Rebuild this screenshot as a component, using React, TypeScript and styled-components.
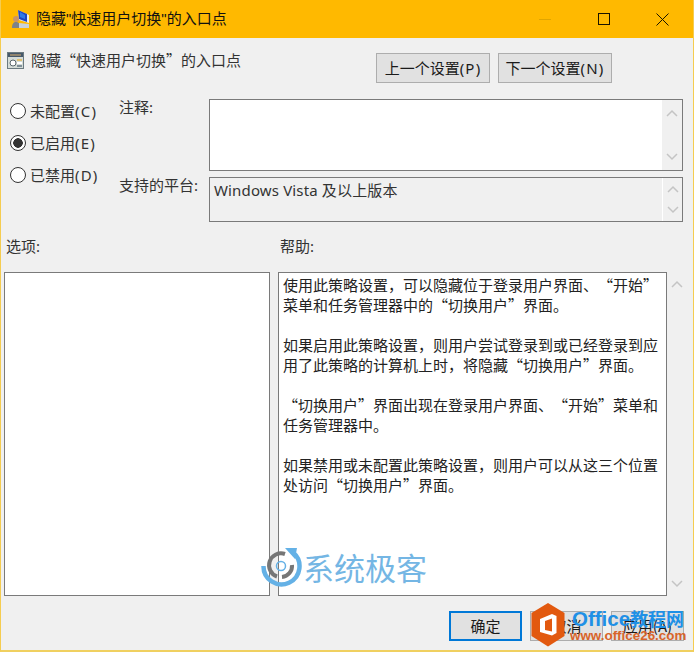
import React from "react";
import styled, { createGlobalStyle } from "styled-components";

const UI_FONT = `"Noto Sans", "Noto Sans CJK SC", sans-serif`;
const CJK_FONT = `"Noto Sans CJK SC", "Noto Sans", sans-serif`;

const GlobalStyle = createGlobalStyle`
  html, body {
    margin: 0;
    padding: 0;
    background: #f0f0f0;
  }
`;

const helpParagraphs = [
  ["使用此策略设置\uff0c可以隐藏位于登录用户界面、“开始”", "菜单和任务管理器中的“切换用户”界面。"],
  ["如果启用此策略设置\uff0c则用户尝试登录到或已经登录到应", "用了此策略的计算机上时\uff0c将隐藏“切换用户”界面。"],
  ["“切换用户”界面出现在登录用户界面、“开始”菜单和", "任务管理器中。"],
  ["如果禁用或未配置此策略设置\uff0c则用户可以从这三个位置", "处访问“切换用户”界面。"],
];

const radios = [
  { label: "未配置", hotkey: "(C)", checked: false },
  { label: "已启用", hotkey: "(E)", checked: true },
  { label: "已禁用", hotkey: "(D)", checked: false },
];

const Chevron = ({ up }: { up?: boolean }) => (
  <svg width="12" height="8" viewBox="0 0 12 8">
    <path
      d={up ? "M1 7 L6 2 L11 7" : "M1 1 L6 6 L11 1"}
      fill="none"
      stroke="#c4c4c4"
      strokeWidth="1.5"
    />
  </svg>
);

const AppIcon = () => (
  <svg width="20" height="20" viewBox="0 0 20 20">
    <path d="M7 1 L18 6 L18 14 L8 11 Z" fill="#e8eef5" />
    <path d="M7 1 L16 5 L16 13 L8 10 Z" fill="#1f45c0" />
    <path d="M9 3 L14 6 L14 10 L9 8 Z" fill="#2f7ae8" />
    <circle cx="5" cy="10" r="3" fill="#c99468" />
    <path d="M1 19 C1 14 3 13 5 13 C8 13 9 15 9 19 Z" fill="#7d8288" />
    <path d="M8 14 L18 15 L18 19 L8 19 Z" fill="#c9d2da" />
  </svg>
);

const PolicyIcon = () => (
  <svg width="17" height="17" viewBox="0 0 17 17">
    <rect x="0.5" y="0.5" width="16" height="16" fill="#d5dcd8" stroke="#6b7a80" />
    <rect x="1" y="1" width="15" height="4" fill="#46586a" />
    <rect x="3" y="2.5" width="11" height="1" fill="#d9b070" />
    <circle cx="6" cy="11" r="3" fill="#fff" stroke="#59666c" />
    <rect x="10" y="7" width="5" height="2" fill="#e0c070" />
    <rect x="10" y="10" width="5" height="2" fill="#fff" />
    <rect x="10" y="13" width="5" height="2" fill="#7f8f98" />
  </svg>
);

export default function App() {
  return (
    <Window>
      <GlobalStyle />
      <TitleBar>
        <AppIcon />
        <TitleText>隐藏"快速用户切换"的入口点</TitleText>
        <WindowControls>
          <ControlSlot>
            <svg width="12" height="12" viewBox="0 0 12 12">
              <path d="M0 6.5 H12" stroke="#e0a500" />
            </svg>
          </ControlSlot>
          <ControlSlot>
            <svg width="12" height="12" viewBox="0 0 12 12">
              <rect x="0.5" y="0.5" width="11" height="11" fill="none" stroke="#1a1400" />
            </svg>
          </ControlSlot>
          <ControlSlot>
            <svg width="13" height="13" viewBox="0 0 13 13">
              <path d="M0.5 0.5 L12.5 12.5 M12.5 0.5 L0.5 12.5" stroke="#1a1400" />
            </svg>
          </ControlSlot>
        </WindowControls>
      </TitleBar>

      <Body>
        <HeaderRow>
          <PolicyName>
            <PolicyIcon />
            <PolicyText>隐藏“快速用户切换”的入口点</PolicyText>
          </PolicyName>
          <NavButtons>
            <NavButton>上一个设置<Hotkey>(P)</Hotkey></NavButton>
            <NavButton>下一个设置<Hotkey>(N)</Hotkey></NavButton>
          </NavButtons>
        </HeaderRow>

        <ConfigRow>
          <RadioColumn>
            {radios.map((radio) => (
              <RadioRow key={radio.label}>
                <RadioCircle $checked={radio.checked} />
                <span>
                  {radio.label}
                  <Hotkey>{radio.hotkey}</Hotkey>
                </span>
              </RadioRow>
            ))}
          </RadioColumn>
          <FieldGrid>
            <FieldLabel>注释:</FieldLabel>
            <FieldBox $height={72} $white>
              <ScrollRail $inset>
                <Chevron up />
                <Chevron />
              </ScrollRail>
            </FieldBox>
            <FieldLabel>支持的平台:</FieldLabel>
            <FieldBox $height={45}>
              <PlatformText>Windows Vista 及以上版本</PlatformText>
              <ScrollRail $divider>
                <Chevron up />
                <Chevron />
              </ScrollRail>
            </FieldBox>
          </FieldGrid>
        </ConfigRow>

        <PanelHeadings>
          <OptionsHeading>选项:</OptionsHeading>
          <span>帮助:</span>
        </PanelHeadings>

        <Panels>
          <OptionsPanel />
          <HelpPanel>
            {helpParagraphs.map((lines) => (
              <HelpParagraph key={lines[0]}>
                {lines.map((line) => (
                  <div key={line}>{line}</div>
                ))}
              </HelpParagraph>
            ))}
          </HelpPanel>
          <HelpRail>
            <Chevron up />
            <Chevron />
          </HelpRail>
        </Panels>

        <Footer>
          <DialogButton $primary>确定</DialogButton>
          <DialogButton>取消</DialogButton>
          <DialogButton>应用(A)</DialogButton>
        </Footer>
      </Body>

      <SiteMark>
        <svg width="42" height="40" viewBox="0 0 42 40">
          <path
            d="M2.5 19 A18 18 0 1 0 32 5.5"
            fill="none"
            stroke="#64b1e6"
            strokeWidth="4.5"
          />
          <path d="M24 1 L36 1 L34 12 Z" fill="#64b1e6" />
          <path
            d="M24 7 A11.5 11.5 0 0 0 16 29.5"
            fill="none"
            stroke="#767676"
            strokeWidth="4"
          />
          <path d="M31 18 A11 11 0 0 1 21 30" fill="none" stroke="#767676" strokeWidth="4" />
          <circle cx="20" cy="19" r="4.5" fill="none" stroke="#64b1e6" strokeWidth="1.5" />
        </svg>
        <SiteMarkText>系统极客</SiteMarkText>
      </SiteMark>

      <OfficeMark>
        <svg width="34" height="44" viewBox="0 0 34 44">
          <path d="M17 0 L33.5 10 L33.5 33 L17 43.5 L0.5 33 L0.5 10 Z" fill="#e2590f" />
          <path
            d="M9 16 L21 11 L25.5 13 L25.5 30 L21 32.5 L9 29 Z M14 18 L21 15.5 L21 28.5 L14 27 Z"
            fill="#fff"
            fillRule="evenodd"
          />
        </svg>
        <OfficeText>
          <OfficeName>
            Office<OfficeNameCjk>教程网</OfficeNameCjk>
          </OfficeName>
          <OfficeUrl>www.office26.com</OfficeUrl>
        </OfficeText>
      </OfficeMark>
    </Window>
  );
}

const Window = styled.div`
  position: relative;
  width: 694px;
  height: 652px;
  box-sizing: border-box;
  overflow: hidden;
  display: flex;
  flex-direction: column;
  background: #f0f0f0;
  color: #1a1a1a;
  font-family: ${UI_FONT};
  font-size: 15px;
  line-height: 20px;
  border-left: 1px solid #f5cc50;
  border-right: 1px solid #f5cc50;
  border-bottom: 2px solid #f0d060;
`;

const TitleBar = styled.div`
  height: 38px;
  margin: 0 -1px;
  padding-left: 11px;
  display: flex;
  align-items: center;
  background: #ffb900;
  flex-shrink: 0;
`;

const TitleText = styled.div`
  margin-left: 5px;
  font-family: "Liberation Sans", "Noto Sans CJK SC", sans-serif;
  font-size: 15px;
  color: #111;
`;

const WindowControls = styled.div`
  margin-left: auto;
  margin-right: 8px;
  display: flex;
  gap: 12px;
`;

const ControlSlot = styled.div`
  width: 47px;
  display: flex;
  justify-content: center;
  align-items: center;
`;

const Body = styled.div`
  flex: 1;
  display: flex;
  flex-direction: column;
`;

const HeaderRow = styled.div`
  height: 58px;
  display: flex;
  justify-content: space-between;
  align-items: flex-start;
  flex-shrink: 0;
`;

const PolicyName = styled.div`
  margin: 12px 0 0 6px;
  display: flex;
  align-items: center;
  gap: 7px;
`;

const PolicyText = styled.span`
  font-family: ${CJK_FONT};
  color: #333;
`;

const NavButtons = styled.div`
  margin: 15px 81px 0 0;
  display: flex;
  gap: 8px;
`;

const NavButton = styled.div`
  width: 114px;
  height: 30px;
  box-sizing: border-box;
  border: 1px solid #adadad;
  background: #e1e1e1;
  display: flex;
  align-items: center;
  justify-content: center;
`;

const Hotkey = styled.span`
  letter-spacing: 1.2px;
`;

const ConfigRow = styled.div`
  display: flex;
  flex-shrink: 0;
`;

const RadioColumn = styled.div`
  width: 118px;
  box-sizing: border-box;
  padding: 5px 0 0 9px;
  display: flex;
  flex-direction: column;
  gap: 12px;
`;

const RadioRow = styled.label`
  display: flex;
  align-items: center;
  gap: 4px;
  height: 20px;
  color: #333;
`;

const RadioCircle = styled.span<{ $checked: boolean }>`
  width: 16px;
  height: 16px;
  box-sizing: border-box;
  border: 1px solid #333;
  border-radius: 50%;
  background: ${(props) =>
    props.$checked
      ? "radial-gradient(circle, #333 0 4.5px, #fff 5px)"
      : "#fff"};
`;

const FieldGrid = styled.div`
  padding-top: 3px;
  display: grid;
  grid-template-columns: 90px 474px;
  row-gap: 6px;
`;

const FieldLabel = styled.div`
  line-height: 16px;
  color: #333;
`;

const FieldBox = styled.div<{ $height: number; $white?: boolean }>`
  height: ${(props) => props.$height}px;
  box-sizing: border-box;
  border: 1px solid #7a7a7a;
  background: ${(props) => (props.$white ? "#fff" : "#f0f0f0")};
  display: flex;
  justify-content: space-between;
`;

const PlatformText = styled.div`
  padding: 2px 0 0 4px;
  letter-spacing: 0.15px;
  color: #333;
`;

const ScrollRail = styled.div<{ $inset?: boolean; $divider?: boolean }>`
  width: 20px;
  box-sizing: border-box;
  display: flex;
  flex-direction: column;
  justify-content: space-between;
  align-items: center;
  margin-left: auto;
  padding: ${(props) => (props.$inset ? "9px 0" : "7px 0")};
  background: #f0f0f0;
  border-left: ${(props) => (props.$divider ? "1px solid #fff" : "none")};
`;

const PanelHeadings = styled.div`
  margin-top: 14px;
  height: 36px;
  display: flex;
  padding-left: 5px;
  color: #333;
  flex-shrink: 0;
`;

const OptionsHeading = styled.span`
  width: 274px;
`;

const Panels = styled.div`
  height: 324px;
  display: flex;
  padding-left: 3px;
  flex-shrink: 0;
`;

const OptionsPanel = styled.div`
  width: 266px;
  box-sizing: border-box;
  border: 1px solid #7a7a7a;
  background: #fff;
`;

const HelpPanel = styled.div`
  margin-left: 8px;
  width: 389px;
  box-sizing: border-box;
  border: 1px solid #7a7a7a;
  background: #fff;
  padding: 2px 0 0 4px;
  font-family: ${CJK_FONT};
  color: #222;
  white-space: nowrap;
  text-spacing-trim: space-all;
`;

const HelpParagraph = styled.div`
  margin-bottom: 20px;
`;

const HelpRail = styled.div`
  width: 20px;
  display: flex;
  flex-direction: column;
  justify-content: space-between;
  align-items: center;
  padding: 8px 0;
  box-sizing: border-box;
`;

const Footer = styled.div`
  margin-top: 15px;
  padding-right: 9px;
  display: flex;
  justify-content: flex-end;
  gap: 8px;
`;

const DialogButton = styled.div<{ $primary?: boolean }>`
  width: 73px;
  height: 30px;
  box-sizing: border-box;
  border: ${(props) =>
    props.$primary ? "2px solid #0078d7" : "1px solid #adadad"};
  background: #e1e1e1;
  display: flex;
  align-items: center;
  justify-content: center;
  font-family: ${CJK_FONT};
`;

const SiteMark = styled.div`
  position: absolute;
  left: 260px;
  top: 547px;
  display: flex;
  align-items: center;
`;

const SiteMarkText = styled.div`
  font-family: ${CJK_FONT};
  font-size: 31px;
  line-height: 38px;
  color: #74b6e4;
`;

const OfficeMark = styled.div`
  position: absolute;
  left: 530px;
  top: 603px;
  display: flex;
  gap: 7px;
`;

const OfficeText = styled.div`
  display: flex;
  flex-direction: column;
  padding-top: 5px;
`;

const OfficeName = styled.div`
  font-family: "Liberation Sans", sans-serif;
  font-size: 20.5px;
  line-height: 21px;
  font-weight: bold;
  color: #1e90e6;
  white-space: nowrap;
`;

const OfficeNameCjk = styled.span`
  font-family: "Noto Sans CJK SC", sans-serif;
  font-size: 18px;
`;

const OfficeUrl = styled.div`
  margin-left: -2px;
  font-family: "Liberation Sans", sans-serif;
  font-size: 13.4px;
  line-height: 14px;
  font-weight: bold;
  color: #d8642a;
  white-space: nowrap;
`;
